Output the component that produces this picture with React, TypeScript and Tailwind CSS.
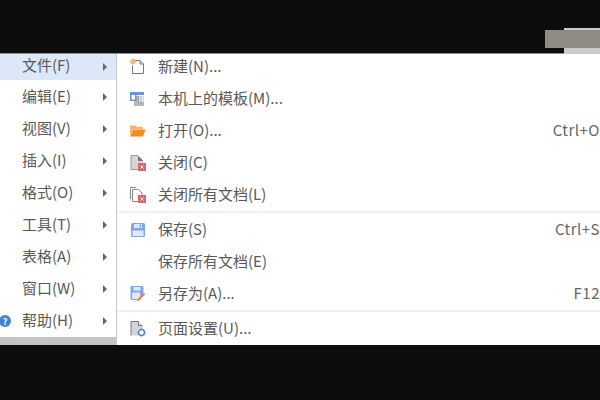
import React from 'react';

const font = { fontFamily: '"Noto Sans CJK SC", sans-serif' };

const leftItems = ['文件(F)', '编辑(E)', '视图(V)', '插入(I)', '格式(O)', '工具(T)', '表格(A)', '窗口(W)', '帮助(H)'];

const NewIcon = () => (
  <svg width="18" height="18" viewBox="0 0 18 18" fill="none">
    <path d="M6 2.5H11L14.5 6V15.5H3.5V7.5" stroke="#777" strokeWidth="1" />
    <path d="M11 2.5V6H14.5" stroke="#777" strokeWidth="1" />
    <circle cx="4" cy="3.5" r="2.6" fill="#f6a860" />
    <path d="M4 0V7M0.5 3.5H7.5" stroke="#f9c48f" strokeWidth="1" />
  </svg>
);

const TemplateIcon = () => (
  <svg width="18" height="18" viewBox="0 0 18 18" fill="none">
    <rect x="5" y="6" width="10" height="10" fill="#b8b8b8" />
    <rect x="9.5" y="6" width="5" height="6" fill="#f2f2f2" />
    <path d="M9.5 6V13M12 6V13" stroke="#888" strokeWidth="0.8" />
    <rect x="1" y="2" width="14" height="3" fill="#5f95e6" />
    <rect x="1" y="2" width="6.5" height="9" fill="#5f95e6" />
    <rect x="2.5" y="5" width="3.5" height="4.5" fill="#fff" />
  </svg>
);

const OpenIcon = () => (
  <svg width="18" height="18" viewBox="0 0 18 18" fill="none">
    <path d="M1 3.5H6.5L8 5H14V7H4L1 13Z" fill="#f9b26b" />
    <path d="M4.2 7.5H16.5L14 14.5H1Z" fill="#f58a22" />
  </svg>
);

const CloseBadge = () => (
  <>
    <rect x="9" y="9" width="8" height="8" fill="#e2626a" />
    <path d="M11.5 11.5L14.5 14.5M14.5 11.5L11.5 14.5" stroke="#fff" strokeWidth="1" />
  </>
);

const CloseIcon = () => (
  <svg width="18" height="18" viewBox="0 0 18 18" fill="none">
    <path d="M2 1.5H9L14 6.5V10H9V15.5H2Z" fill="#d6d6d6" />
    <path d="M9.5 2V6.5H14" fill="#777" stroke="#777" strokeWidth="1" />
    <path d="M2 1.5H9M2 1.5V15.5H9" stroke="#999" strokeWidth="1" />
    <CloseBadge />
  </svg>
);

const CloseAllIcon = () => (
  <svg width="18" height="18" viewBox="0 0 18 18" fill="none">
    <path d="M1.5 13V1.5H7" stroke="#888" strokeWidth="1" />
    <path d="M3.5 15.5V3.5H9.5L13 7V9M3.5 15.5H9" stroke="#888" strokeWidth="1" />
    <CloseBadge />
  </svg>
);

const SaveIcon = () => (
  <svg width="18" height="18" viewBox="0 0 18 18" fill="none">
    <path d="M2 3.5Q2 2 3.5 2H14.5Q16 2 16 3.5V14.5Q16 16 14.5 16H3.5Q2 16 2 14.5Z" fill="#7ea6f0" />
    <rect x="5" y="3" width="8" height="4" fill="#dfe9fb" />
    <rect x="10.5" y="3.5" width="1.5" height="3" fill="#7ea6f0" />
    <rect x="3.5" y="9.5" width="11" height="5.5" fill="#dfe9fb" />
  </svg>
);

const SaveAsIcon = () => (
  <svg width="18" height="18" viewBox="0 0 18 18" fill="none">
    <path d="M1.5 2.5Q1.5 1 3 1H13Q14.5 1 14.5 2.5V8L8 15H3Q1.5 15 1.5 13.5Z" fill="#7ea6f0" />
    <rect x="4.5" y="2" width="7" height="3.5" fill="#dfe9fb" />
    <rect x="3" y="7.5" width="8" height="6.5" fill="#dfe9fb" />
    <path d="M8.5 15.5L15.5 8.5" stroke="#f0803c" strokeWidth="2.2" />
    <path d="M2.5 16.5H8" stroke="#c9d8f5" strokeWidth="1" strokeDasharray="1 1" />
  </svg>
);

const PageSetupIcon = () => (
  <svg width="18" height="18" viewBox="0 0 18 18" fill="none">
    <path d="M2 1.5H9.5L13.5 5.5V9H9V15.5H2Z" fill="#d4d4d4" />
    <path d="M2 15.5V1.5H9.5V5.5H13.5" stroke="#777" strokeWidth="1" />
    <circle cx="12.5" cy="12.5" r="3" stroke="#4d86e0" strokeWidth="1.6" />
    <path d="M12.5 8.5V9.5M12.5 15.5V16.5M8.5 12.5H9.5M15.5 12.5H16.5" stroke="#4d86e0" strokeWidth="1" />
  </svg>
);

const Arrow = () => (
  <svg width="4" height="8" viewBox="0 0 4 8" className="text-[#666]">
    <path d="M0 0L4 4L0 8Z" fill="currentColor" />
  </svg>
);

const HelpBadge = () => (
  <span className="flex h-[12px] w-[12px] items-center justify-center rounded-full bg-[#3d85d8] text-[9px] font-bold leading-none text-white">
    ?
  </span>
);

const MenuRow = ({ icon, label, hint }: { icon?: React.ReactNode; label: string; hint?: string }) => (
  <div className="flex h-[32px] items-center">
    <div className="flex w-[41px] shrink-0 justify-start pl-[12px]">{icon}</div>
    <span className="relative -top-[1px] flex-1 whitespace-nowrap">{label}</span>
    {hint && (
      <span className="relative -top-[1px] whitespace-nowrap tracking-[0.5px] text-[#666]">{hint}</span>
    )}
  </div>
);

const App = () => {
  return (
    <div className="relative flex h-[400px] w-[600px] flex-col overflow-hidden bg-[#0d0d0d]" style={font}>
      {/* blurred patch in the top right corner */}
      <div className="absolute right-0 top-[28px] h-[26px] w-[36px] bg-[#cccccc]" />
      <div className="absolute right-0 top-[30px] h-[18px] w-[55px] bg-[#8f8b83]" />

      <div className="mt-[53px] h-[1px] bg-[#8c8c8c]" />
      <div className="flex h-[291px] text-[15px] text-[#595959]">
        <div className="flex w-[116px] shrink-0 flex-col bg-[#b9b9b9]">
          <div className="flex-1 bg-white">
            {leftItems.map((item, i) => (
              <div
                key={item}
                className={`flex items-center pr-[9px] ${i === 0 ? 'h-[26px] bg-[#dce7f8]' : 'h-[32px]'} ${i === 1 ? 'mt-[1px]' : ''}`}
              >
                <div className="w-[23px] shrink-0 -ml-[1px]">{item === '帮助(H)' && <HelpBadge />}</div>
                <span className={`relative flex-1 whitespace-nowrap ${i === 0 ? '-top-[2px]' : '-top-[1px]'}`}>{item}</span>
                <Arrow />
              </div>
            ))}
          </div>
          <div className="h-[9px] bg-[#c4c4c4]" />
        </div>

        <div className="w-[1px] shrink-0 bg-[#c8c8c8]" />

        <div className="flex-1 bg-white">
          <div className="-mt-[3px]">
            <MenuRow icon={<NewIcon />} label="新建(N)..." />
            <MenuRow icon={<TemplateIcon />} label="本机上的模板(M)..." />
            <MenuRow icon={<OpenIcon />} label="打开(O)..." hint="Ctrl+O" />
            <MenuRow icon={<CloseIcon />} label="关闭(C)" />
            <MenuRow icon={<CloseAllIcon />} label="关闭所有文档(L)" />
          </div>
          <div className="mb-[1px] h-[2px] bg-[#f2f2f2]" />
          <MenuRow icon={<SaveIcon />} label="保存(S)" hint="Ctrl+S" />
          <MenuRow label="保存所有文档(E)" />
          <MenuRow icon={<SaveAsIcon />} label="另存为(A)..." hint="F12" />
          <div className="mb-[1px] h-[2px] bg-[#f2f2f2]" />
          <MenuRow icon={<PageSetupIcon />} label="页面设置(U)..." />
        </div>
      </div>
    </div>
  );
};

export default App;
